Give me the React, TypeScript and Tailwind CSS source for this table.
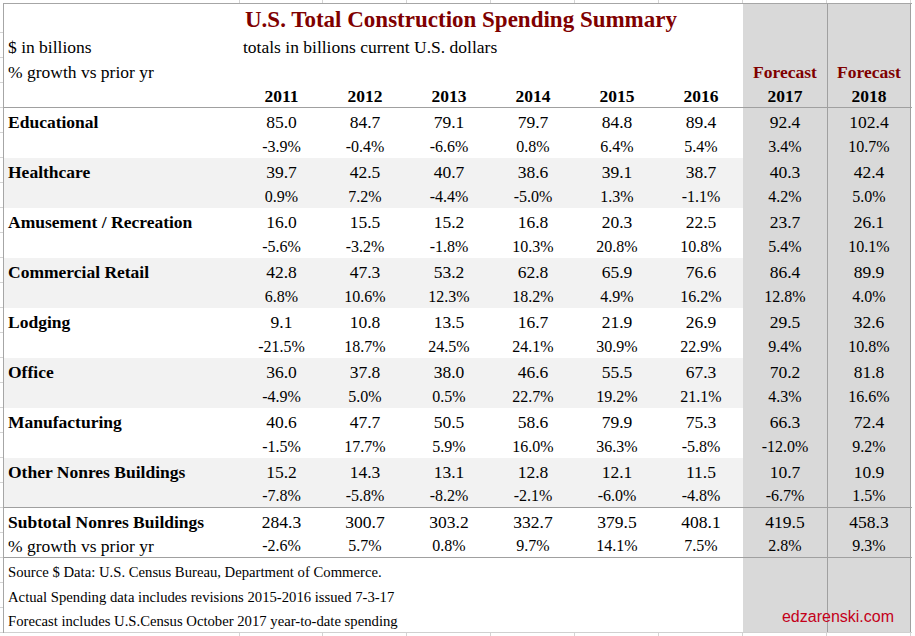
// U.S. Total Construction Spending Summary — spreadsheet screenshot

type Row = {
  label: string;
  values: string[];
  growth: string[];
};

const GRID = "grid grid-cols-[236px_83px_84px_84px_84px_84px_84px_84px_84px]";

const years = ["2011", "2012", "2013", "2014", "2015", "2016", "2017", "2018"];

const rows: Row[] = [
  {
    label: "Educational",
    values: ["85.0", "84.7", "79.1", "79.7", "84.8", "89.4", "92.4", "102.4"],
    growth: ["-3.9%", "-0.4%", "-6.6%", "0.8%", "6.4%", "5.4%", "3.4%", "10.7%"],
  },
  {
    label: "Healthcare",
    values: ["39.7", "42.5", "40.7", "38.6", "39.1", "38.7", "40.3", "42.4"],
    growth: ["0.9%", "7.2%", "-4.4%", "-5.0%", "1.3%", "-1.1%", "4.2%", "5.0%"],
  },
  {
    label: "Amusement / Recreation",
    values: ["16.0", "15.5", "15.2", "16.8", "20.3", "22.5", "23.7", "26.1"],
    growth: ["-5.6%", "-3.2%", "-1.8%", "10.3%", "20.8%", "10.8%", "5.4%", "10.1%"],
  },
  {
    label: "Commercial Retail",
    values: ["42.8", "47.3", "53.2", "62.8", "65.9", "76.6", "86.4", "89.9"],
    growth: ["6.8%", "10.6%", "12.3%", "18.2%", "4.9%", "16.2%", "12.8%", "4.0%"],
  },
  {
    label: "Lodging",
    values: ["9.1", "10.8", "13.5", "16.7", "21.9", "26.9", "29.5", "32.6"],
    growth: ["-21.5%", "18.7%", "24.5%", "24.1%", "30.9%", "22.9%", "9.4%", "10.8%"],
  },
  {
    label: "Office",
    values: ["36.0", "37.8", "38.0", "46.6", "55.5", "67.3", "70.2", "81.8"],
    growth: ["-4.9%", "5.0%", "0.5%", "22.7%", "19.2%", "21.1%", "4.3%", "16.6%"],
  },
  {
    label: "Manufacturing",
    values: ["40.6", "47.7", "50.5", "58.6", "79.9", "75.3", "66.3", "72.4"],
    growth: ["-1.5%", "17.7%", "5.9%", "16.0%", "36.3%", "-5.8%", "-12.0%", "9.2%"],
  },
  {
    label: "Other Nonres Buildings",
    values: ["15.2", "14.3", "13.1", "12.8", "12.1", "11.5", "10.7", "10.9"],
    growth: ["-7.8%", "-5.8%", "-8.2%", "-2.1%", "-6.0%", "-4.8%", "-6.7%", "1.5%"],
  },
];

const subtotal: Row = {
  label: "Subtotal Nonres Buildings",
  values: ["284.3", "300.7", "303.2", "332.7", "379.5", "408.1", "419.5", "458.3"],
  growth: ["-2.6%", "5.7%", "0.8%", "9.7%", "14.1%", "7.5%", "2.8%", "9.3%"],
};

const notes = [
  "Source $ Data: U.S. Census Bureau, Department of Commerce.",
  "Actual Spending data includes revisions 2015-2016 issued 7-3-17",
  "Forecast includes U.S.Census October 2017 year-to-date spending",
];

//------------------forecast cells (2017 / 2018)------------------
function Forecast({ children, last, className = "" }: { children?: React.ReactNode; last?: boolean; className?: string }) {
  return (
    <div
      className={`flex items-end justify-center bg-[#d9d9d9] ${last ? "border-x border-[#a0a0a0]" : ""} ${className}`}
    >
      {children}
    </div>
  );
}

//------------------one line of the sheet------------------
function Line({
  label,
  cells,
  labelClass,
  cellClass,
  band,
  className = "",
}: {
  label?: string;
  cells: string[];
  labelClass: string;
  cellClass: string;
  band?: boolean;
  className?: string;
}) {
  const bg = band ? "bg-[#f2f2f2]" : "";
  return (
    <div className={`${GRID} h-[25px] ${className}`}>
      <div className={`flex items-end whitespace-nowrap pl-[4px] ${bg} ${labelClass}`}>{label}</div>
      {cells.slice(0, 6).map((c, i) => (
        <div key={i} className={`flex items-end justify-center ${bg} ${cellClass}`}>
          {c}
        </div>
      ))}
      <Forecast className={cellClass}>{cells[6]}</Forecast>
      <Forecast className={cellClass} last>
        {cells[7]}
      </Forecast>
    </div>
  );
}

function Ticks() {
  return (
    <div className={`${GRID} h-[3px] pl-[4px] w-[912px]`}>
      {Array.from({ length: 9 }).map((_, i) => (
        <div key={i} className="border-r border-[#d4d4d4]" />
      ))}
    </div>
  );
}

export default function App() {
  const valueText = "text-[17.5px] leading-none pb-[2px]";
  const pctText = "text-[16px] leading-none pb-[3px]";
  const labelBold = "text-[17.5px] leading-none pb-[2px] font-bold";

  return (
    <div className="w-[915px] h-[636px] bg-white overflow-hidden font-['Liberation_Serif','Times_New_Roman',serif] text-black">
      <Ticks />
      <div className="flex">
        {/* grid lines of the column to the left */}
        <div className="flex w-[3px] flex-col">
          <div className="h-[30px] border-b border-[#d4d4d4]" />
          {Array.from({ length: 24 }).map((_, i) => (
            <div key={i} className="h-[25px] border-b border-[#d4d4d4]" />
          ))}
        </div>

        <div className="w-[909px] border-l border-t border-[#a6a6a6]">
          {/* title */}
          <div className={`${GRID} h-[29px]`}>
            <div />
            <div className="col-span-6 flex items-end whitespace-nowrap pb-[2px] pl-[5px] text-[23px] font-bold leading-none text-[#7f0000]">
              U.S. Total Construction Spending Summary
            </div>
            <Forecast />
            <Forecast last />
          </div>

          <div className={`${GRID} h-[25px]`}>
            <div className="flex items-end whitespace-nowrap pb-[2px] pl-[4px] text-[17.5px] leading-none">$ in billions</div>
            <div className="col-span-6 flex items-end whitespace-nowrap pb-[2px] pl-[3px] text-[17.5px] leading-none">
              totals in billions current U.S. dollars
            </div>
            <Forecast />
            <Forecast last />
          </div>

          <Line
            label="% growth vs prior yr"
            cells={["", "", "", "", "", "", "Forecast", "Forecast"]}
            labelClass="text-[17.5px] leading-none pb-[2px]"
            cellClass="text-[17.5px] leading-none pb-[2px] font-bold text-[#7f0000]"
          />
          <Line
            cells={years}
            labelClass=""
            cellClass={`${labelBold}`}
            className="border-b border-[#a0a0a0]"
          />

          {rows.map((r, idx) => (
            <div key={r.label}>
              <Line label={r.label} cells={r.values} labelClass={labelBold} cellClass={valueText} band={idx % 2 === 1} />
              <Line
                cells={r.growth}
                labelClass=""
                cellClass={pctText}
                band={idx % 2 === 1}
                className={idx === rows.length - 1 ? "border-b border-[#a0a0a0]" : ""}
              />
            </div>
          ))}

          <Line label={subtotal.label} cells={subtotal.values} labelClass={labelBold} cellClass={valueText} />
          <Line
            label="% growth vs prior yr"
            cells={subtotal.growth}
            labelClass="text-[17.5px] leading-none pb-[2px]"
            cellClass={pctText}
            className="border-b border-[#a0a0a0]"
          />

          {notes.map((n, i) => (
            <div
              key={n}
              className={`${GRID} relative h-[25px] ${i === notes.length - 1 ? "border-b border-[#d0d0d0]" : ""}`}
            >
              <div className="col-span-7 flex items-end whitespace-nowrap pb-[3.5px] pl-[4px] text-[14.7px] leading-none">
                {n}
              </div>
              <Forecast />
              <Forecast last />
              {i === notes.length - 1 && (
                <span className="absolute bottom-[7px] right-[18px] font-['Liberation_Sans',Arial,sans-serif] text-[16px] leading-none text-[#c4001a]">
                  edzarenski.com
                </span>
              )}
            </div>
          ))}
        </div>
      </div>
      <Ticks />
    </div>
  );
}
